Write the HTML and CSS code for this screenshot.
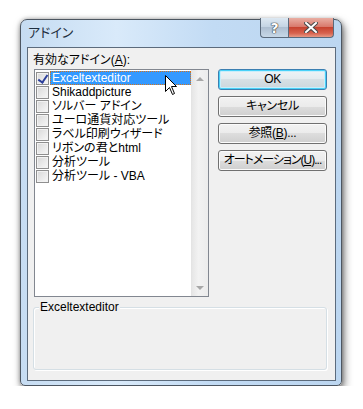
FILE: index.html
```html
<!doctype html>
<html lang="ja">
<head>
    <meta charset="UTF-8">
    <title>アドイン</title>
    <link rel="stylesheet" href="styles.css">
</head>
<body>
<div class="window">
    <div class="titlebar">
        <span class="title">アドイン</span>
        <div class="caption">
            <span class="cap help">?</span>
            <span class="cap close">
                <svg width="14" height="11" viewBox="0 0 14 11">
                    <path d="M2 1 L12 10 M12 1 L2 10" stroke="#4a4a4a" stroke-width="4" stroke-linecap="square"/>
                    <path d="M2 1 L12 10 M12 1 L2 10" stroke="#fff" stroke-width="2" stroke-linecap="square"/>
                </svg>
            </span>
        </div>
    </div>
    <div class="client">
        <div class="main">
            <div class="left">
                <div class="label">有効なアドイン(<u>A</u>):</div>
                <div class="listbox">
                    <ul class="items">
                        <li class="sel"><span class="check on"></span><span class="name">Exceltexteditor</span></li>
                        <li><span class="check"></span><span class="name">Shikaddpicture</span></li>
                        <li><span class="check"></span><span class="name">ソルバー アドイン</span></li>
                        <li><span class="check"></span><span class="name">ユーロ通貨対応ツール</span></li>
                        <li><span class="check"></span><span class="name">ラベル印刷ウィザード</span></li>
                        <li><span class="check"></span><span class="name">リボンの君とhtml</span></li>
                        <li><span class="check"></span><span class="name">分析ツール</span></li>
                        <li><span class="check"></span><span class="name">分析ツール - VBA</span></li>
                    </ul>
                    <div class="scrollbar">
                        <span class="arrow up"></span>
                        <span class="arrow down"></span>
                    </div>
                    <svg class="cursor" width="13" height="21" viewBox="0 0 13 21">
                        <path d="M0.5 0.5 L0.5 16.5 L4.5 12.5 L7.5 19.5 L9.5 18.5 L6.5 11.5 L11.5 11.5 Z" fill="#fff" stroke="#000" stroke-width="1"/>
                    </svg>
                </div>
            </div>
            <div class="buttons">
                <div class="btn default">OK</div>
                <div class="btn">キャンセル</div>
                <div class="btn">参照(<u>B</u>)...</div>
                <div class="btn tight">オートメーション(<u>U</u>)...</div>
            </div>
        </div>
        <div class="group">
            <span class="group-title">Exceltexteditor</span>
        </div>
    </div>
</div>
</body>
</html>
```

FILE: styles.css
```css
* {
    margin: 0;
    padding: 0;
    list-style: none;
    box-sizing: border-box;
}

body {
    background: #fff;
    font-family: "Liberation Sans", "Noto Sans CJK JP", sans-serif;
    font-size: 12px;
    font-feature-settings: "palt";
    color: #000;
}

.window {
    width: 322px;
    height: 367px;
    margin: 19px 0 0 20px;
    border: 1px solid #4d5661;
    border-radius: 7px 7px 5px 5px;
    background: linear-gradient(to right, #c6dcf2 0%, #d9eafa 30%, #c2dbf4 60%, #bcd6f0 100%);
    box-shadow: 2px 4px 9px rgba(0, 0, 0, 0.55), 0 0 4px rgba(0, 0, 0, 0.3);
    padding: 0 5px 4px 6px;
    display: flex;
    flex-direction: column;
}

.titlebar {
    height: 27px;
    display: flex;
    justify-content: space-between;
    align-items: flex-start;
}

.title {
    margin: 6px 0 0 1px;
    font-size: 13px;
    line-height: 14px;
    color: #1e2e40;
}

.caption {
    display: flex;
    margin: -2px 2px 0 0;
}

.cap {
    height: 20px;
    border: 1px solid #5a6a7c;
    border-top: none;
    display: flex;
    align-items: center;
    justify-content: center;
}

.help {
    width: 28px;
    border-right: none;
    border-radius: 0 0 0 4px;
    background: linear-gradient(#dde8f2 0%, #c5d5e4 45%, #aebfd1 50%, #c7d8e8 100%);
    color: #fff;
    font-family: "DejaVu Sans", sans-serif;
    font-weight: bold;
    font-size: 14px;
    text-shadow: 0 0 1px #333, 0 0 1px #333, 0 0 1px #333;
}

.close {
    width: 46px;
    border-radius: 0 0 4px 0;
    background: linear-gradient(#e9aea3 0%, #d97a6d 45%, #c74330 50%, #d7624e 80%, #e89a86 100%);
}

.client {
    flex: 1;
    border: 1px solid #5c6b7c;
    background: #f0f0f0;
}

.main {
    display: flex;
}

.left {
    width: 181px;
    padding-left: 6px;
}

.label {
    margin: 5px 0 2px -1px;
    line-height: 14px;
    height: 14px;
}

.listbox {
    position: relative;
    width: 175px;
    height: 228px;
    border: 1px solid #828790;
    background: #fff;
    display: flex;
}

.items {
    flex: 1;
    padding: 1px 0 0 1px;
}

.items li {
    height: 14px;
    display: flex;
    align-items: center;
}

.check {
    width: 13px;
    height: 13px;
    border: 1px solid #8f8f8f;
    background: linear-gradient(135deg, #d8d8d8, #f8f8f8);
    box-shadow: inset 0 0 0 1px #f2f2f2;
    position: relative;
}

.check.on::after {
    content: "";
    position: absolute;
    left: 3px;
    top: 0;
    width: 4px;
    height: 8px;
    border: solid #2c3f9a;
    border-width: 0 2px 2px 0;
    transform: rotate(35deg);
}

.name {
    flex: 1;
    height: 14px;
    line-height: 14px;
    padding-left: 2px;
    margin-left: 1px;
    white-space: nowrap;
}

.sel .name {
    background: #3399ff;
    color: #fff;
    border: 1px dotted #d6741a;
    line-height: 12px;
    padding-left: 1px;
}

.scrollbar {
    width: 17px;
    border-left: 1px solid #e4e4e4;
    background: linear-gradient(to right, #e6e6e6, #f2f2f2 40%, #ececec);
    display: flex;
    flex-direction: column;
    justify-content: space-between;
    align-items: center;
    padding: 7px 0 6px;
}

.arrow {
    width: 0;
    height: 0;
    border-left: 4px solid transparent;
    border-right: 4px solid transparent;
}

.arrow.up {
    border-bottom: 4px solid #a7a7a7;
}

.arrow.down {
    border-top: 4px solid #a7a7a7;
}

.cursor {
    position: absolute;
    left: 130px;
    top: 5px;
}

.buttons {
    margin-left: 9px;
    padding-top: 21px;
    display: flex;
    flex-direction: column;
    gap: 6px;
}

.btn {
    width: 109px;
    height: 21px;
    border: 1px solid #707070;
    border-radius: 3px;
    background: linear-gradient(#f2f2f2 0%, #ebebeb 50%, #dddddd 50%, #cfcfcf 100%);
    box-shadow: inset 0 0 0 1px #fbfbfb;
    text-align: center;
    line-height: 19px;
    white-space: nowrap;
    letter-spacing: -0.3px;
}

.btn.tight {
    letter-spacing: -1px;
}

.btn.default {
    border-color: #3c7fb1;
    box-shadow: inset 0 0 0 1px #48d1f8, inset 0 0 0 2px #c8eefb;
    background: linear-gradient(#eef4f7 0%, #e3ebef 50%, #d6e0e5 50%, #cbd6dc 100%);
}

.group {
    margin: 10px 0 0 5px;
    width: 294px;
    height: 63px;
    border: 1px solid #d5dfe5;
    border-radius: 3px;
    box-shadow: inset 1px 1px 0 #fff, 1px 1px 0 #fff;
}

.group-title {
    display: inline-block;
    margin: -8px 0 0 5px;
    padding: 0 1px;
    background: #f0f0f0;
    line-height: 14px;
    vertical-align: top;
}
```
